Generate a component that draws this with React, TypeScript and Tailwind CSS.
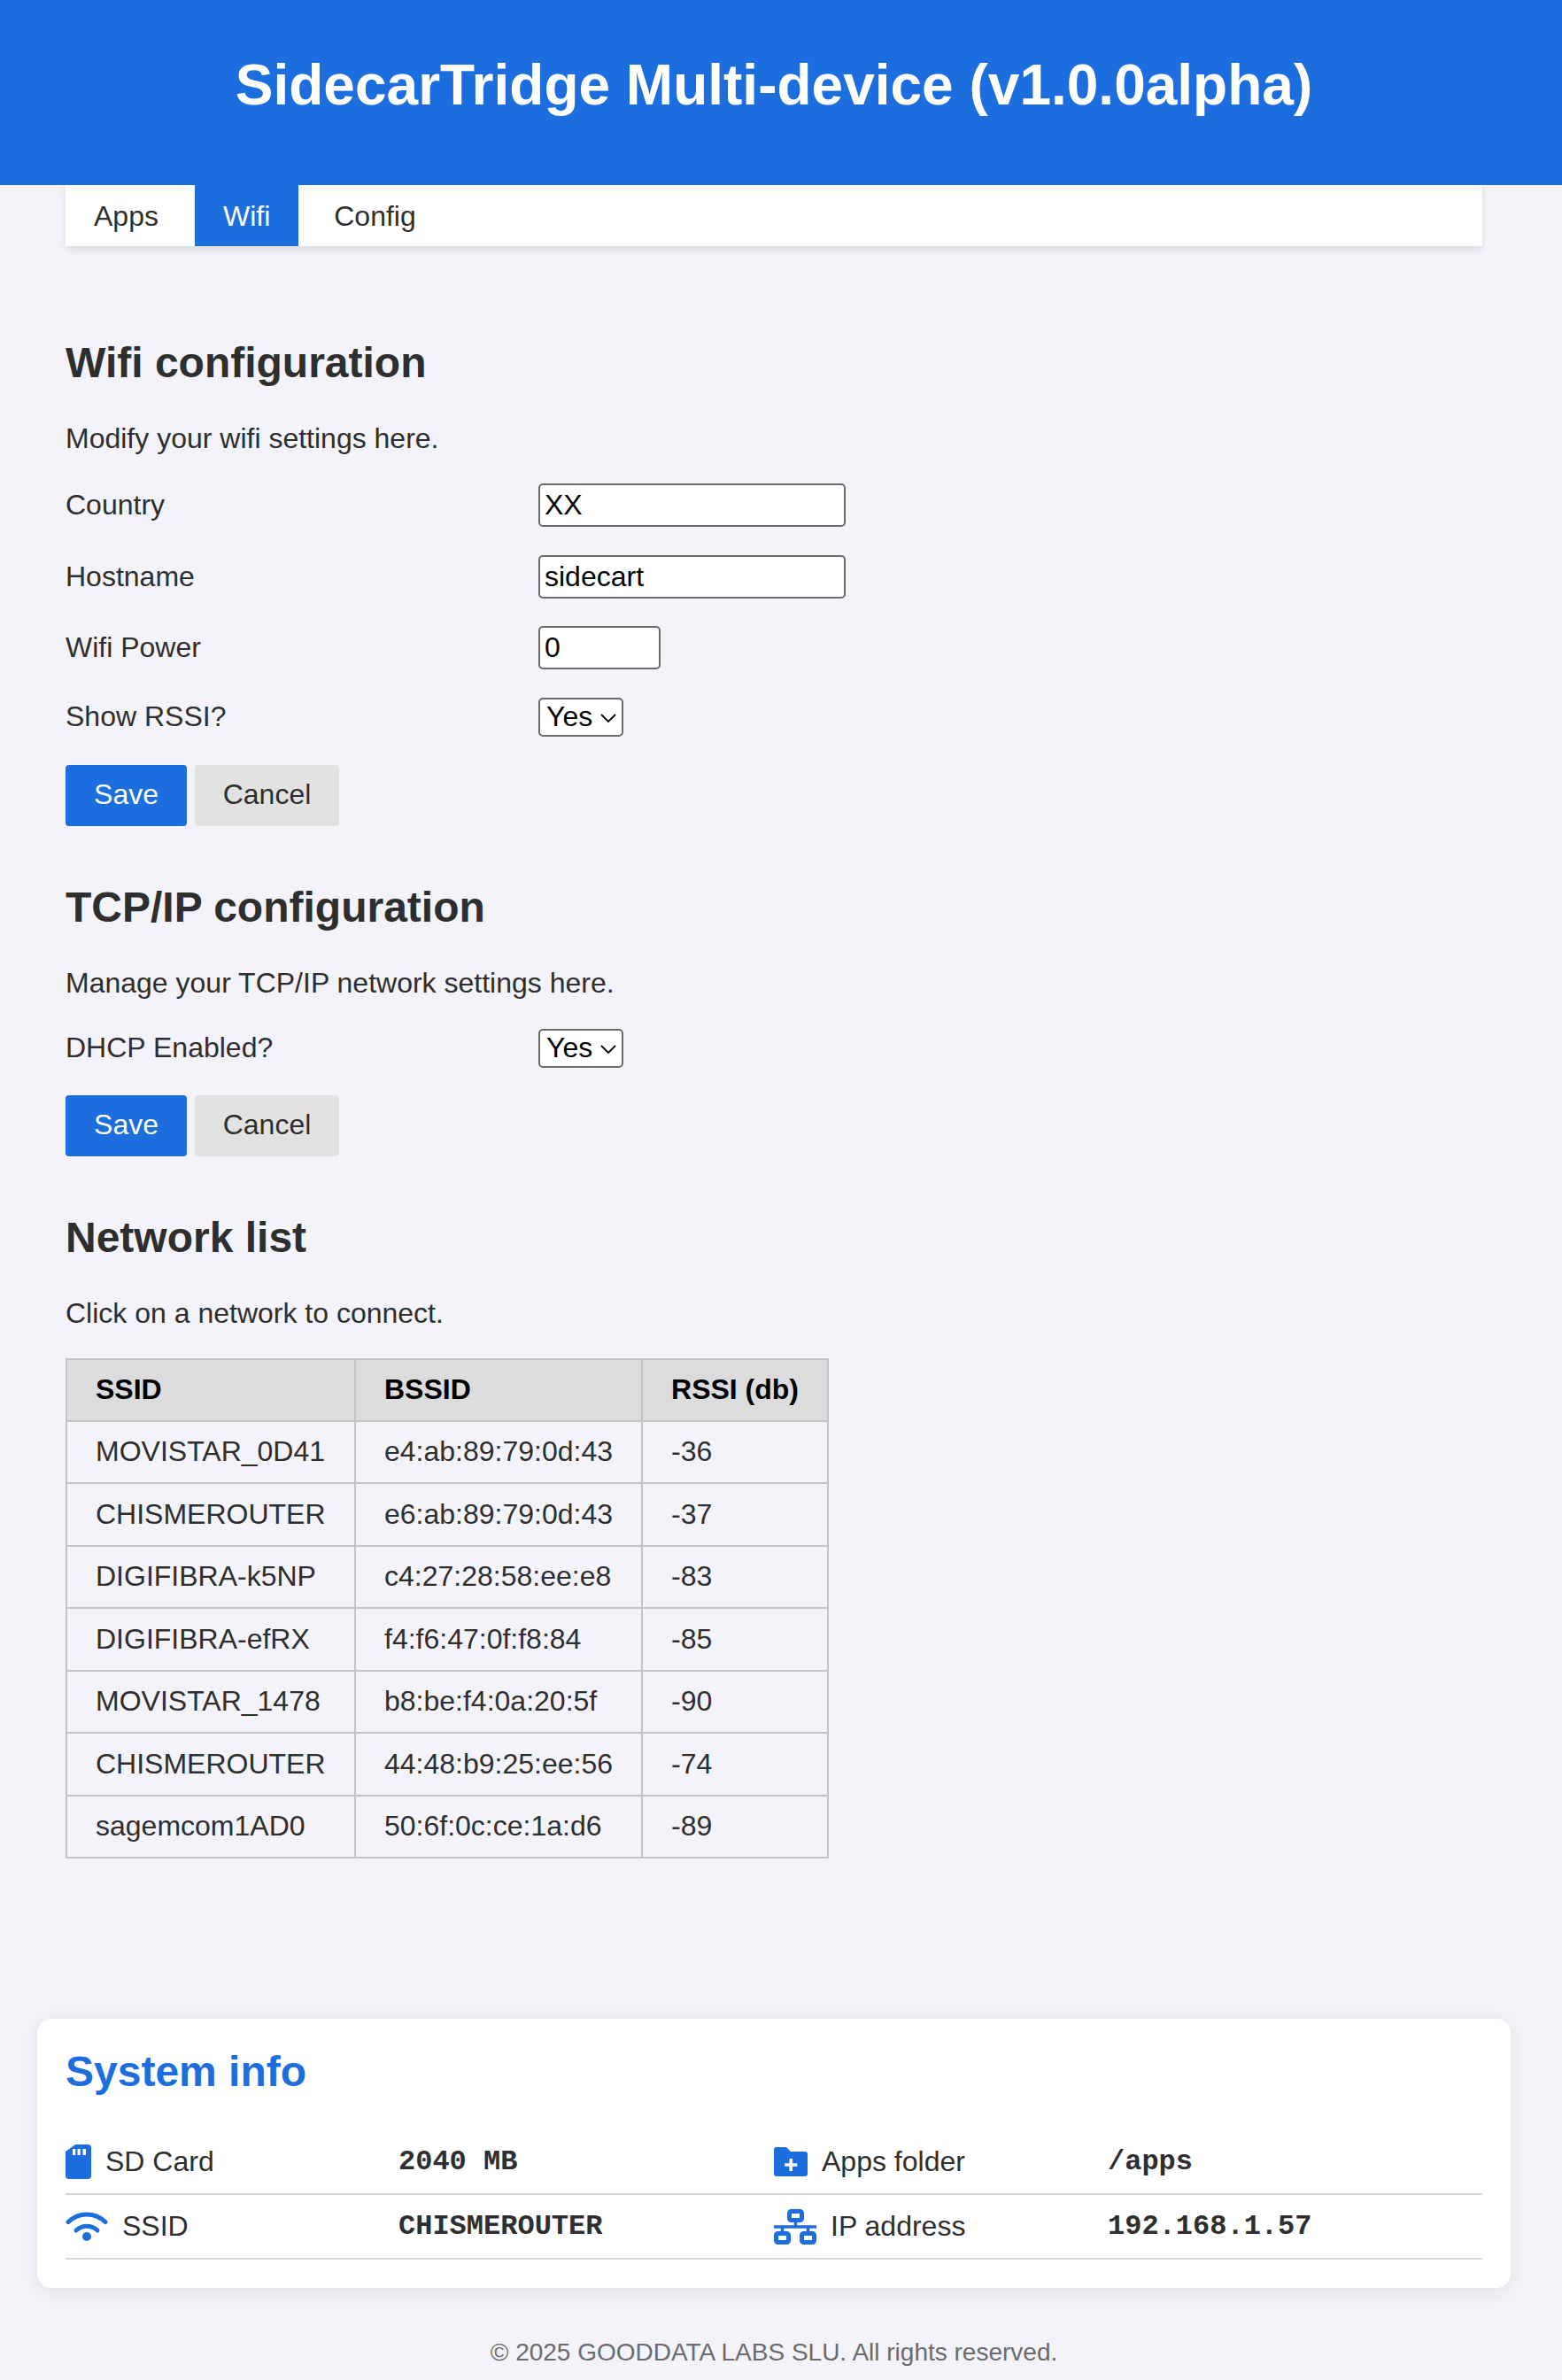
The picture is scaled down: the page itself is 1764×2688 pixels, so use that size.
const sans = "font-['Liberation_Sans',Arial,sans-serif]";

const networks = [
  ["MOVISTAR_0D41", "e4:ab:89:79:0d:43", "-36"],
  ["CHISMEROUTER", "e6:ab:89:79:0d:43", "-37"],
  ["DIGIFIBRA-k5NP", "c4:27:28:58:ee:e8", "-83"],
  ["DIGIFIBRA-efRX", "f4:f6:47:0f:f8:84", "-85"],
  ["MOVISTAR_1478", "b8:be:f4:0a:20:5f", "-90"],
  ["CHISMEROUTER", "44:48:b9:25:ee:56", "-74"],
  ["sagemcom1AD0", "50:6f:0c:ce:1a:d6", "-89"],
];

const SdIcon = () => (
  <svg viewBox="0 0 29 39" className="w-[29px] h-[39px] shrink-0 fill-[#1c6ddd]">
    <path d="M11 0h14a4 4 0 0 1 4 4v31a4 4 0 0 1-4 4H4a4 4 0 0 1-4-4V8z" />
    <rect x="8" y="5" width="3.300" height="7" fill="#fff" />
    <rect x="13.500" y="5" width="3.300" height="7" fill="#fff" />
    <rect x="19.500" y="5" width="3.500" height="7" fill="#fff" />
  </svg>
);

const FolderIcon = () => (
  <svg viewBox="0 0 38 33" className="w-[38px] h-[33px] shrink-0 fill-[#1c6ddd]">
    <path d="M3 0h11l5 5h16a3 3 0 0 1 3 3v22a3 3 0 0 1-3 3H3a3 3 0 0 1-3-3V3a3 3 0 0 1 3-3z" />
    <path d="M17.500 13h3.500v5.300h5.300v3.400H21V27h-3.500v-5.300h-5.300v-3.400h5.300z" fill="#fff" />
  </svg>
);

const WifiIcon = () => (
  <svg viewBox="0 0 48 33" className="w-[48px] h-[33px] shrink-0 fill-none stroke-[#1c6ddd]">
    <path d="M3 11.500C15 0 33 0 45 11.500" strokeWidth="5" strokeLinecap="round" />
    <path d="M12 21c7-6.500 17-6.500 24 0" strokeWidth="5" strokeLinecap="round" />
    <circle cx="24" cy="28" r="5" className="fill-[#1c6ddd] stroke-none" />
  </svg>
);

const NetworkIcon = () => (
  <svg viewBox="0 0 48 40" className="w-[48px] h-[40px] shrink-0 fill-none stroke-[#1c6ddd]">
    <rect x="17.500" y="2.500" width="14" height="10" rx="2" strokeWidth="5" />
    <rect x="2.500" y="27.500" width="14" height="10" rx="2" strokeWidth="5" />
    <rect x="31.500" y="27.500" width="14" height="10" rx="2" strokeWidth="5" />
    <path d="M24.500 14v6M0 20h48M9.500 20v6M38.500 20v6" strokeWidth="3.500" />
  </svg>
);

const Field = ({ label, children }: { label: string; children: React.ReactNode }) => (
  <div className="flex items-center">
    <label className="w-[534px] shrink-0 text-[32px] leading-[37px] text-[#2e2e2e]">{label}</label>
    {children}
  </div>
);

const YesSelect = () => (
  <div className="relative w-[96px] h-[44px]">
    <select
      defaultValue="Yes"
      className="w-full h-full appearance-none bg-white border-2 border-[#6b6b6b] rounded-[5px] pl-[7px] text-[32px] leading-[37px] text-black"
    >
      <option>Yes</option>
      <option>No</option>
    </select>
    <svg viewBox="0 0 20 12" className="absolute right-[7px] top-[17px] w-[20px] h-[12px] fill-none stroke-black stroke-[1.8] pointer-events-none">
      <path d="M2 2l8 8 8-8" />
    </svg>
  </div>
);

const Buttons = () => (
  <div className="flex gap-[9px]">
    <button className="h-[69px] w-[137px] pb-[2px] rounded-[4px] bg-[#1c6ddd] text-white text-[32px]">Save</button>
    <button className="h-[69px] w-[163px] pb-[2px] rounded-[4px] bg-[#e2e2e2] text-[#2e2e2e] text-[32px]">Cancel</button>
  </div>
);

const SectionTitle = ({ children }: { children: React.ReactNode }) => (
  <h2 className="text-[48px] leading-[55px] font-bold text-[#2e2e2e]">{children}</h2>
);

const Text = ({ children }: { children: React.ReactNode }) => (
  <p className="text-[32px] leading-[37px] text-[#2e2e2e]">{children}</p>
);

const Label = ({ icon, text }: { icon: React.ReactNode; text: string }) => (
  <div className="flex items-center gap-[16px] text-[32px] leading-[37px] text-[#2e2e2e]">
    {icon}
    <span>{text}</span>
  </div>
);

const Mono = ({ children }: { children: React.ReactNode }) => (
  <div className="font-['Liberation_Mono',monospace] font-bold text-[32px] text-[#2e2e2e]">{children}</div>
);

export default function App() {
  return (
    <div className={`${sans} min-h-[2688px] bg-[#f3f3f9] pb-[12px]`}>
      <header className="h-[209px] bg-[#1c6ddd] pr-[16px] pb-[17px] flex items-center justify-center">
        <h1 className="text-[64px] font-bold text-white">SidecarTridge Multi-device (v1.0.0alpha)</h1>
      </header>

      <div className="w-[1748px]">
        <nav className="mx-[74px] h-[69px] flex bg-white shadow-[0_4px_8px_rgba(0,0,0,0.1)] text-[32px] text-[#2e2e2e]">
          <a className="pl-[32px] pr-[41px] flex items-center">Apps</a>
          <a className="px-[32px] flex items-center bg-[#1c6ddd] text-white">Wifi</a>
          <a className="pl-[40px] flex items-center">Config</a>
        </nav>

        <main className="px-[74px] pt-[104px]">
          <SectionTitle>Wifi configuration</SectionTitle>
          <div className="mt-[40px]">
            <Text>Modify your wifi settings here.</Text>
          </div>
          <div className="mt-[32px] flex flex-col gap-[31.5px]">
            <Field label="Country">
              <input defaultValue="XX" className="w-[347px] h-[49px] bg-white border-2 border-[#6b6b6b] rounded-[5px] px-[5px] text-[32px] text-black" />
            </Field>
            <Field label="Hostname">
              <input defaultValue="sidecart" className="w-[347px] h-[49px] bg-white border-2 border-[#6b6b6b] rounded-[5px] px-[5px] text-[32px] text-black" />
            </Field>
            <Field label="Wifi Power">
              <input defaultValue="0" className="w-[138px] h-[49px] bg-white border-2 border-[#6b6b6b] rounded-[5px] px-[5px] text-[32px] text-black" />
            </Field>
            <Field label="Show RSSI?">
              <YesSelect />
            </Field>
          </div>
          <div className="mt-[32px]">
            <Buttons />
          </div>

          <div className="mt-[64px]">
            <SectionTitle>TCP/IP configuration</SectionTitle>
          </div>
          <div className="mt-[40px]">
            <Text>Manage your TCP/IP network settings here.</Text>
          </div>
          <div className="mt-[33px]">
            <Field label="DHCP Enabled?">
              <YesSelect />
            </Field>
          </div>
          <div className="mt-[31px]">
            <Buttons />
          </div>

          <div className="mt-[64px]">
            <SectionTitle>Network list</SectionTitle>
          </div>
          <div className="mt-[40px]">
            <Text>Click on a network to connect.</Text>
          </div>

          <table className="mt-[32px] w-[862px] border-collapse text-[32px] leading-[37px] text-[#2e2e2e]">
            <thead>
              <tr className="bg-[#dcdcdc] text-black">
                <th className="w-[327px] h-[70px] border-2 border-[#c4c4c4] px-[32px] text-left font-bold">SSID</th>
                <th className="w-[324px] h-[70px] border-2 border-[#c4c4c4] px-[32px] text-left font-bold">BSSID</th>
                <th className="h-[70px] border-2 border-[#c4c4c4] px-[32px] text-left font-bold whitespace-nowrap">RSSI (db)</th>
              </tr>
            </thead>
            <tbody>
              {networks.map((network, index) => (
                <tr key={index}>
                  {network.map((cell) => (
                    <td key={cell} className="h-[70.5px] border-2 border-[#c4c4c4] px-[32px]">{cell}</td>
                  ))}
                </tr>
              ))}
            </tbody>
          </table>
        </main>

        <section className="mx-[42px] mt-[181px] h-[304px] rounded-[16px] bg-white shadow-[0_4px_24px_rgba(0,0,0,0.08)] px-[32px] pt-[32px]">
          <h2 className="text-[48px] leading-[55px] font-bold text-[#1c6ddd]">System info</h2>
          <div className="mt-[39px] grid grid-cols-[376px_424px_377px_423px]">
            <div className="col-span-4 grid grid-cols-subgrid h-[73px] items-center border-b-2 border-[#d8d8d8]">
              <Label icon={<SdIcon />} text="SD Card" />
              <Mono>2040 MB</Mono>
              <Label icon={<FolderIcon />} text="Apps folder" />
              <Mono>/apps</Mono>
            </div>
            <div className="col-span-4 grid grid-cols-subgrid h-[73px] items-center border-b-2 border-[#d8d8d8]">
              <Label icon={<WifiIcon />} text="SSID" />
              <Mono>CHISMEROUTER</Mono>
              <Label icon={<NetworkIcon />} text="IP address" />
              <Mono>192.168.1.57</Mono>
            </div>
          </div>
        </section>

        <footer className="mt-[52px] text-center text-[28px] text-[#6b6b6b]">© 2025 GOODDATA LABS SLU. All rights reserved.</footer>
      </div>
    </div>
  );
}
